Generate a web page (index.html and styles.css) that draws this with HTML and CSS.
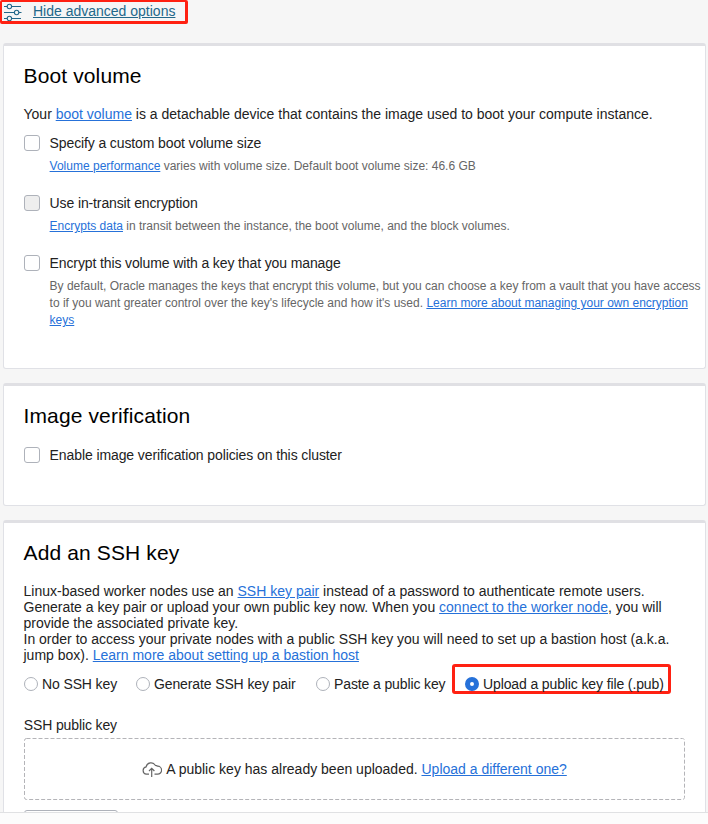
FILE: index.html
```html
<!DOCTYPE html>
<html lang="en">
<head>
<meta charset="utf-8">
<title>Advanced options</title>
<link rel="stylesheet" href="styles.css">
</head>
<body>
<main class="content">
  <a class="toggle">
    <svg class="sliders" width="18" height="18" viewBox="0 0 18 18" fill="none" stroke="currentColor" stroke-width="1.1">
      <path d="M0 3.500h3.200M7.600 3.500h9.400M0 9.500h10.200M15 9.500h2.500M0 15.500h3.200M7.600 15.500h9.400"/>
      <circle cx="5.400" cy="3.500" r="2.200"/><circle cx="12.600" cy="9.500" r="2.200"/><circle cx="5.400" cy="15.500" r="2.200"/>
    </svg>
    <span class="toggle-text">Hide advanced options</span>
  </a>

  <section class="card boot">
    <h2>Boot volume</h2>
    <p class="intro">Your <a>boot volume</a> is a detachable device that contains the image used to boot your compute instance.</p>
    <div class="option">
      <span class="checkbox"></span>
      <div>
        <div class="label">Specify a custom boot volume size</div>
        <p class="hint"><a>Volume performance</a> varies with volume size. Default boot volume size: 46.6 GB</p>
      </div>
    </div>
    <div class="option">
      <span class="checkbox disabled"></span>
      <div>
        <div class="label">Use in-transit encryption</div>
        <p class="hint"><a>Encrypts data</a> in transit between the instance, the boot volume, and the block volumes.</p>
      </div>
    </div>
    <div class="option">
      <span class="checkbox"></span>
      <div>
        <div class="label">Encrypt this volume with a key that you manage</div>
        <p class="hint">By default, Oracle manages the keys that encrypt this volume, but you can choose a key from a vault that you have access<br>to if you want greater control over the key's lifecycle and how it's used. <a>Learn more about managing your own encryption<br>keys</a></p>
      </div>
    </div>
  </section>

  <section class="card verification">
    <h2>Image verification</h2>
    <div class="option">
      <span class="checkbox"></span>
      <div class="label">Enable image verification policies on this cluster</div>
    </div>
  </section>

  <section class="card ssh">
    <h2>Add an SSH key</h2>
    <p class="description">Linux-based worker nodes use an <a>SSH key pair</a> instead of a password to authenticate remote users.<br>Generate a key pair or upload your own public key now. When you <a>connect to the worker node</a>, you will<br>provide the associated private key.<br>In order to access your private nodes with a public SSH key you will need to set up a bastion host (a.k.a.<br>jump box). <a>Learn more about setting up a bastion host</a></p>
    <div class="radios">
      <div class="choice none"><span class="radio"></span>No SSH key</div>
      <div class="choice generate"><span class="radio"></span>Generate SSH key pair</div>
      <div class="choice paste"><span class="radio"></span>Paste a public key</div>
      <div class="choice highlighted"><span class="radio selected"></span>Upload a public key file (.pub)</div>
    </div>
    <div class="field-label">SSH public key</div>
    <div class="dropzone">
      <svg class="dash" width="661" height="62"><rect x=".5" y=".5" width="660" height="61" rx="2"/></svg>
      <svg class="cloud" width="20" height="17" viewBox="0 0 20 17" fill="none" stroke="#666" stroke-width="1.200">
        <path d="M7 13.200H4.400A3.700 3.700 0 0 1 4.100 5.900A5 5 0 0 1 13.300 4.300A4.500 4.500 0 0 1 15.600 5.200A4 4 0 0 1 15.600 13.200H12.500M9.700 16V7.300M7 10l2.700-2.700L12.400 10"/>
      </svg>
      <span>A public key has already been uploaded. <a>Upload a different one?</a></span>
    </div>
    <div class="button"></div>
  </section>
</main>
<footer class="footer"></footer>
</body>
</html>
```
FILE: styles.css
```css
* { box-sizing: border-box; }
body {
  margin: 0;
  height: 824px;
  overflow: hidden;
  background: #f6f6f6;
  color: #222;
  font: 14px/16px "Liberation Sans", Arial, sans-serif;
}
h2, p { margin: 0; }
a { color: #2671d9; text-decoration: underline; }
.content {
  height: 812px;
  overflow: hidden;
  padding-right: 2px;
}
.toggle {
  display: flex;
  align-items: center;
  width: 188px;
  height: 24px;
  padding-left: 2px;
  border: 3px solid #ff2112;
  border-width: 2px 3px 3px 2px;
  border-radius: 2px;
  color: #22688a;
  text-decoration: none;
}
.sliders { margin-top: 1px; }
.toggle-text { margin: -1px 0 0 11px; text-decoration: underline; }
.card {
  margin: 0 0 14px 3px;
  padding: 0 0 0 20px;
  background: #fff;
  border: 1px solid #e0e1e6;
  border-top: 3px solid #e0e0e4;
  border-radius: 3px;
}
.boot { height: 326px; margin-top: 19px; }
.verification { height: 123px; }
.ssh { height: 320px; }
h2 {
  padding-top: 18px;
  margin-left: -.5px;
  font-size: 21px;
  font-weight: 400;
  line-height: 24px;
  letter-spacing: .13px;
  color: #000;
}
.intro { margin: 18px 0 13px -.5px; }
.option { display: flex; gap: 9.6px; height: 60px; }
.checkbox {
  flex: none;
  width: 16px;
  height: 16px;
  border: 1px solid #aeb2ba;
  border-radius: 3px;
}
.disabled { background: #eee; }
.label, .choice, .field-label { letter-spacing: -.12px; }
.hint {
  margin-top: 7px;
  font-size: 12px;
  line-height: 17px;
  color: #666;
  white-space: nowrap;
}
.verification .option { margin-top: 19px; }
.verification .label { letter-spacing: -.1px; }
.description { margin: 18px 0 0 -.5px; white-space: nowrap; }
.radios { display: flex; height: 30px; margin-top: 1px; }
.choice { display: flex; align-items: center; gap: 4px; padding-top: 9px; height: 30px; white-space: nowrap; }
.none { width: 112px; }
.generate { width: 180px; }
.paste { width: 136px; }
.radio {
  flex: none;
  width: 14px;
  height: 14px;
  border: 1px solid #aeb2ba;
  border-radius: 50%;
}
.selected { border: 5px solid #2671d9; }
.highlighted {
  width: 219px;
  padding: 10px 0 0 10px;
  border: 3px solid #ff2112;
  border-radius: 3px;
}
.field-label { margin: 23px 0 0 -.3px; }
.dropzone {
  position: relative;
  display: flex;
  align-items: center;
  justify-content: center;
  gap: 4px;
  width: 661px;
  height: 62px;
  margin-top: 5px;
}
.dash { position: absolute; inset: 0; }
.dash rect { fill: none; stroke: #b4b4b8; stroke-dasharray: 4 2; }
.button {
  width: 94px;
  height: 32px;
  margin-top: 10px;
  border: 1px solid #aeb2ba;
  border-radius: 3px;
}
.footer { height: 12px; border-top: 1px solid #e0e1e3; background: #fcfcfc; }
```
